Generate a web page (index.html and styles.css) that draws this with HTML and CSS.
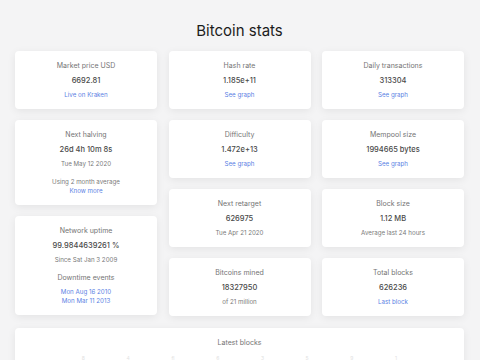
FILE: index.html
```html
<!DOCTYPE html>
<html lang="en">
  <head>
    <meta charset="UTF-8" />
    <meta name="viewport" content="width=device-width, initial-scale=1.0" />
    <title>Bitcoin stats</title>
    <link rel="stylesheet" href="styles.css">
  </head>
  <body>
    <h1 class="page-title">Bitcoin stats</h1>

    <div class="stats-grid">
      <div class="stats-col">
        <div class="card">
          <div class="label">Market price USD</div>
          <div class="value">6692.81</div>
          <a class="sub link" href="#">Live on Kraken</a>
        </div>
        <div class="card">
          <div class="label">Next halving</div>
          <div class="value">26d 4h 10m 8s</div>
          <div class="sub">Tue May 12 2020</div>
          <div class="note-block">
            <div class="note">Using 2 month average</div>
            <a class="note link" href="#">Know more</a>
          </div>
        </div>
        <div class="card">
          <div class="label">Network uptime</div>
          <div class="value">99.9844639261 %</div>
          <div class="sub">Since Sat Jan 3 2009</div>
          <div class="label spaced">Downtime events</div>
          <div class="events">
            <a class="note link" href="#">Mon Aug 16 2010</a>
            <a class="note link" href="#">Mon Mar 11 2013</a>
          </div>
        </div>
      </div>

      <div class="stats-col">
        <div class="card">
          <div class="label">Hash rate</div>
          <div class="value">1.185e+11</div>
          <a class="sub link" href="#">See graph</a>
        </div>
        <div class="card">
          <div class="label">Difficulty</div>
          <div class="value">1.472e+13</div>
          <a class="sub link" href="#">See graph</a>
        </div>
        <div class="card">
          <div class="label">Next retarget</div>
          <div class="value">626975</div>
          <div class="sub">Tue Apr 21 2020</div>
        </div>
        <div class="card">
          <div class="label">Bitcoins mined</div>
          <div class="value">18327950</div>
          <div class="sub">of 21 million</div>
        </div>
      </div>

      <div class="stats-col">
        <div class="card">
          <div class="label">Daily transactions</div>
          <div class="value">313304</div>
          <a class="sub link" href="#">See graph</a>
        </div>
        <div class="card">
          <div class="label">Mempool size</div>
          <div class="value">1994665 bytes</div>
          <a class="sub link" href="#">See graph</a>
        </div>
        <div class="card">
          <div class="label">Block size</div>
          <div class="value">1.12 MB</div>
          <div class="sub">Average last 24 hours</div>
        </div>
        <div class="card">
          <div class="label">Total blocks</div>
          <div class="value">626236</div>
          <a class="sub link" href="#">Last block</a>
        </div>
      </div>
    </div>

    <div class="card blocks-card">
      <div class="label">Latest blocks</div>
      <div class="chart">
        <span>8</span>
        <span>4</span>
        <span>fl</span>
        <span>6</span>
        <span>3</span>
        <span>5</span>
        <span>9</span>
        <span>1</span>
      </div>
    </div>
  </body>
</html>
```

FILE: styles.css
```css
/* base */
* {
  margin: 0;
  padding: 0;
  box-sizing: border-box;
  font-family: Inter, "Noto Sans", Arial, sans-serif;
}

html,
body {
  overflow: hidden;
}

body {
  background-color: #f4f4f5;
  color: #444;
  padding: 0 16px 0 15px;
}

.page-title {
  text-align: center;
  font-size: 15px;
  font-weight: 400;
  line-height: 18px;
  color: #1c1c1c;
  margin: 22px 0 11px;
}

/* grid of stat cards */
.stats-grid {
  display: grid;
  grid-template-columns: repeat(3, 1fr);
  column-gap: 11.5px;
}

.stats-col {
  display: flex;
  flex-direction: column;
  gap: 11px;
}

.card {
  background-color: #fff;
  border-radius: 4px;
  box-shadow: 0 2px 8px rgba(0, 0, 0, 0.07);
  padding: 10px 6px;
  text-align: center;
}

.label {
  font-size: 7px;
  line-height: 10px;
  color: #747474;
}

.label.spaced {
  margin-top: 9px;
}

.value {
  margin-top: 5px;
  font-size: 7.5px;
  line-height: 10px;
  font-weight: 500;
  color: #4a4a4a;
}

.sub {
  display: block;
  margin-top: 5px;
  font-size: 6.2px;
  line-height: 8px;
  color: #7a7a7a;
}

.note {
  display: block;
  font-size: 6.2px;
  line-height: 9px;
  color: #7a7a7a;
}

.note-block {
  margin-top: 8.5px;
}

.events {
  margin-top: 4px;
}

.link {
  color: #5b7fe4;
  text-decoration: none;
}

/* latest blocks */
.blocks-card {
  margin-top: 12px;
  height: 80px;
}

.chart {
  display: flex;
  justify-content: space-around;
  margin-top: 7px;
  padding: 0 40px;
}

.chart span {
  font-size: 5px;
  color: #e2e2e2;
}
```
